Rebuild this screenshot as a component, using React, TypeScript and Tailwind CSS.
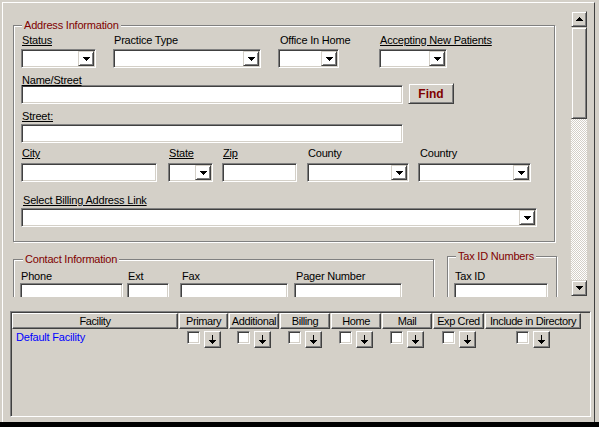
import React from "react"

/* ===== Win2000 bevels ===== */
const sunken =
  "border border-t-[#808080] border-l-[#808080] border-r-white border-b-white shadow-[inset_1px_1px_0_#404040,inset_-1px_-1px_0_#d4d0c8]"
const raised =
  "border border-t-[#d4d0c8] border-l-[#d4d0c8] border-r-[#404040] border-b-[#404040] shadow-[inset_1px_1px_0_#ffffff,inset_-1px_-1px_0_#808080]"
const etched = "border border-[#808080] shadow-[inset_1px_1px_0_#ffffff,1px_1px_0_#ffffff]"

function DownTri() {
  return (
    <svg width="7" height="4" shapeRendering="crispEdges">
      <path d="M0 0h7v1h-1v1h-1v1h-1v1h-1v-1h-1v-1h-1v-1h-1z" fill="#000" />
    </svg>
  )
}

function UpTri() {
  return (
    <svg width="7" height="4" shapeRendering="crispEdges">
      <path d="M3 0h1v1h1v1h1v1h1v1h-7v-1h1v-1h1v-1h1z" fill="#000" />
    </svg>
  )
}

function DownArrow() {
  return (
    <svg width="7" height="9" shapeRendering="crispEdges">
      <path
        d="M3 0h1v5h3v1h-1v1h-1v1h-1v1h-1v-1h-1v-1h-1v-1h-1v-1h3z"
        fill="#000"
      />
    </svg>
  )
}

function Label({
  text,
  u = false,
  className = "",
}: {
  text: string
  u?: boolean
  className?: string
}) {
  return (
    <div
      className={`h-[13px] leading-[13px] whitespace-nowrap ${u ? "underline" : ""} ${className}`}
    >
      {text}
    </div>
  )
}

function Input({ className = "" }: { className?: string }) {
  return <div className={`${sunken} h-[19px] bg-white ${className}`} />
}

function Combo({ className = "" }: { className?: string }) {
  return (
    <div className={`${sunken} h-[19px] bg-white flex justify-end p-[1px] ${className}`}>
      <div className={`${raised} w-[16px] h-full flex items-center justify-center`}>
        <DownTri />
      </div>
    </div>
  )
}

function Legend({ text, className = "" }: { text: string; className?: string }) {
  return (
    <span
      className={`absolute top-[-7px] px-[2px] bg-[#d4d0c8] text-[#800000] leading-[13px] whitespace-nowrap ${className}`}
    >
      {text}
    </span>
  )
}

/* ===== Grid columns ===== */
const columns = [
  { name: "Facility", w: "w-[166px]" },
  { name: "Primary", w: "w-[49px]" },
  { name: "Additional", w: "w-[50px]" },
  { name: "Billing", w: "w-[50px]" },
  { name: "Home", w: "w-[50px]" },
  { name: "Mail", w: "w-[50px]" },
  { name: "Exp Cred", w: "w-[51px]" },
  { name: "Include in Directory", w: "w-[96px]" },
]

export default function App() {
  return (
    <div className="w-[599px] h-[427px] bg-[#d4d0c8] overflow-hidden text-[11px] tracking-[-0.2px] text-black font-['Liberation_Sans',Arial,sans-serif]">
      <div className="ml-[2px] mt-[2px] w-[593px] h-[420px] border-l border-t border-r border-l-white border-t-white border-r-[#404040]">
        {/* Scrolling form area */}
        <div className="flex items-start">
          <div className="w-[566px] h-[294px] overflow-hidden">
            {/* Address Information */}
            <div className={`relative ml-[10px] mt-[22px] w-[542px] h-[217px] ${etched}`}>
              <Legend text="Address Information" className="left-[8px]" />
              <div className="flex flex-col pl-[7px] pt-[8px]">
                <div className="flex items-start">
                  <div className="w-[75px]">
                    <Label text="Status" u className="pl-[1px]" />
                    <Combo className="mt-[2px] w-full" />
                  </div>
                  <div className="ml-[17px] w-[148px]">
                    <Label text="Practice Type" className="pl-[1px]" />
                    <Combo className="mt-[2px] w-full" />
                  </div>
                  <div className="ml-[17px] w-[61px]">
                    <Label text="Office In Home" className="pl-[2px]" />
                    <Combo className="mt-[2px] w-full" />
                  </div>
                  <div className="ml-[40px] w-[68px]">
                    <Label text="Accepting New Patients" u className="pl-[1px]" />
                    <Combo className="mt-[2px] w-full" />
                  </div>
                </div>

                <div className="flex items-start mt-[6px]">
                  <div className="w-[382px]">
                    <Label text="Name/Street" u className="pl-[1px]" />
                    <Input className="mt-[-2px] w-full" />
                  </div>
                  <button
                    type="button"
                    className={`${raised} ml-[5px] mt-[9px] w-[46px] h-[21px] bg-[#d4d0c8] text-[12px] tracking-normal font-bold text-[#800000] flex items-center justify-center`}
                  >
                    Find
                  </button>
                </div>

                <div className="mt-[6px] w-[382px]">
                  <Label text="Street:" u className="pl-[1px]" />
                  <Input className="mt-[1px] w-full" />
                </div>

                <div className="flex items-start mt-[4px]">
                  <div className="w-[136px]">
                    <Label text="City" u className="pl-[1px]" />
                    <Input className="mt-[3px] w-full" />
                  </div>
                  <div className="ml-[11px] w-[45px]">
                    <Label text="State" u className="pl-[1px]" />
                    <Combo className="mt-[3px] w-full" />
                  </div>
                  <div className="ml-[9px] w-[75px]">
                    <Label text="Zip" u className="pl-[1px]" />
                    <Input className="mt-[3px] w-full" />
                  </div>
                  <div className="ml-[10px] w-[102px]">
                    <Label text="County" className="pl-[1px]" />
                    <Combo className="mt-[3px] w-full" />
                  </div>
                  <div className="ml-[9px] w-[113px]">
                    <Label text="Country" className="pl-[2px]" />
                    <Combo className="mt-[3px] w-full" />
                  </div>
                </div>

                <div className="mt-[12px] w-[516px]">
                  <Label text="Select Billing Address Link" u className="pl-[2px]" />
                  <Combo className="mt-[1px] w-full" />
                </div>
              </div>
            </div>

            {/* Contact + Tax ID */}
            <div className="flex items-start mt-[14px]">
              <div className={`relative ml-[10px] mt-[3px] w-[421px] h-[60px] ${etched}`}>
                <Legend text="Contact Information" className="left-[9px]" />
                <div className="flex items-start pl-[6px] pt-[10px]">
                  <div className="w-[103px]">
                    <Label text="Phone" className="pl-[1px]" />
                    <Input className="w-full" />
                  </div>
                  <div className="ml-[4px] w-[42px]">
                    <Label text="Ext" className="pl-[1px]" />
                    <Input className="w-full" />
                  </div>
                  <div className="ml-[11px] w-[108px]">
                    <Label text="Fax" className="pl-[2px]" />
                    <Input className="w-full" />
                  </div>
                  <div className="ml-[6px] w-[108px]">
                    <Label text="Pager Number" className="pl-[2px]" />
                    <Input className="w-full" />
                  </div>
                </div>
              </div>
              <div className={`relative ml-[13px] w-[110px] h-[63px] ${etched}`}>
                <Legend text="Tax ID Numbers" className="left-[8px]" />
                <div className="pl-[6px] pt-[13px] w-[100px]">
                  <Label text="Tax ID" className="pl-[1px]" />
                  <Input className="w-[94px]" />
                </div>
              </div>
            </div>
          </div>

          {/* Vertical scrollbar */}
          <div className="ml-[2px] mt-[8px] w-[16px] h-[285px] flex flex-col">
            <div className={`${raised} h-[16px] bg-[#d4d0c8] flex items-center justify-center`}>
              <UpTri />
            </div>
            <div className={`${raised} h-[92px] bg-[#d4d0c8]`} />
            <div className="flex-1 bg-[repeating-conic-gradient(#ffffff_0%_25%,#d4d0c8_0%_50%)] bg-[length:2px_2px]" />
            <div className={`${raised} h-[16px] bg-[#d4d0c8] flex items-center justify-center`}>
              <DownTri />
            </div>
          </div>
        </div>

        {/* Facility grid */}
        <div className={`ml-[7px] mt-[14px] w-[581px] h-[106px] ${sunken}`}>
          <div className="flex gap-[1px] pl-[1px] pt-[1px]">
            {columns.map((c) => (
              <div
                key={c.name}
                className={`${c.w} h-[16px] border border-t-white border-l-white border-r-[#404040] border-b-[#404040] shadow-[inset_-1px_-1px_0_#808080] flex items-center justify-center leading-[13px] tracking-[-0.4px] whitespace-nowrap overflow-hidden`}
              >
                {c.name}
              </div>
            ))}
          </div>
          <div className="flex gap-[1px] pl-[1px] mt-[2px]">
            {columns.map((c, i) =>
              i === 0 ? (
                <div key={c.name} className={`${c.w} pl-[4px] leading-[13px] text-[#0000ff]`}>
                  Default Facility
                </div>
              ) : (
                <div key={c.name} className={`${c.w} flex justify-center items-start gap-[4px]`}>
                  <div className={`${sunken} w-[13px] h-[13px] bg-white`} />
                  <div className="border border-t-white border-l-white border-r-[#404040] border-b-[#404040] shadow-[inset_-1px_-1px_0_#808080] w-[17px] h-[17px] bg-[#d4d0c8] flex items-center justify-center">
                    <DownArrow />
                  </div>
                </div>
              )
            )}
          </div>
        </div>
      </div>
      <div className="h-[5px] bg-black" />
    </div>
  )
}
